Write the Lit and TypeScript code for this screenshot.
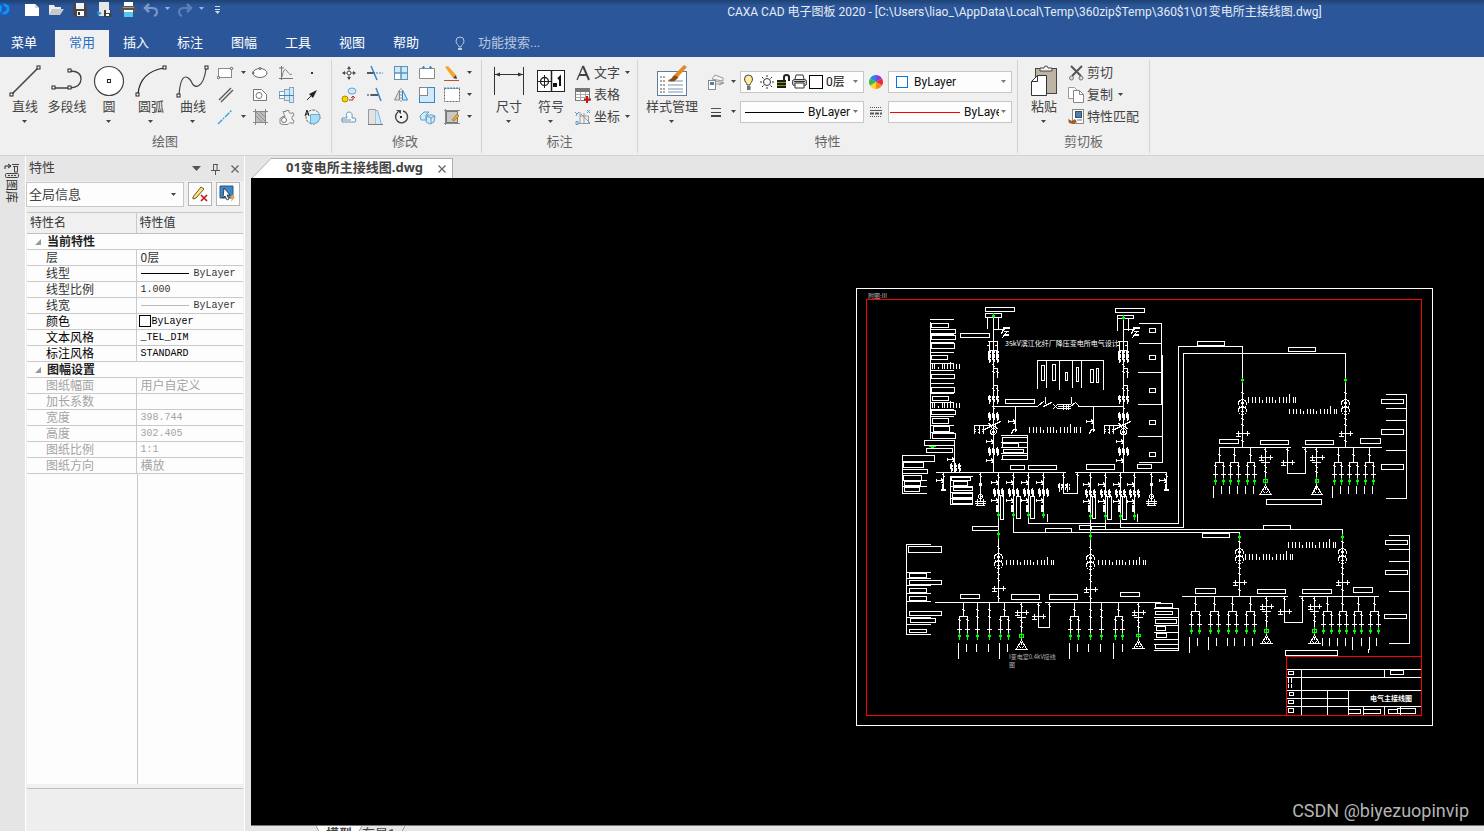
import { LitElement, html, svg, css } from "lit";
import { customElement, property } from "lit/decorators.js";

/* ---------- icons ---------- */
const B = "#3b86c6";
const F = "#cfeafb";
const box = (x: number, y: number) => svg`<rect x=${x} y=${y} width="3" height="3" fill="#fff" stroke="#222"/>`;

const icons: Record<string, any> = {
  logo: svg`<circle cx="4" cy="8" r="4" fill="none" stroke="#1593f5" stroke-width="3"/><path d="M0 2l4 4M8 12l3 3M0 14l3-4M8 3l3 2" stroke="#0a5fd0" stroke-width="2"/>`,
  newdoc: svg`<path d="M1 3h10l4 4v8H1z" fill="#fff"/><path d="M11 3v4h4" fill="#d6d6d6"/>`,
  open: svg`<path d="M1 14V4h5l1 2h6v2H5z" fill="#ececec"/><path d="M1 14l4-6h11l-4 6z" fill="#c9c9c9"/>`,
  save: svg`<path d="M1 2h14v14H3l-2-2z" fill="#474747"/><rect x="4" y="2" width="8" height="6" fill="#f3f3f3"/><rect x="5" y="10" width="7" height="5" fill="#fff"/><rect x="6" y="11" width="2" height="3" fill="#333"/>`,
  saveas: svg`<path d="M3 1h10v8H8v6H3z" fill="#e6e6e6"/><path d="M1 10l5 2-4 3z" fill="#2d9fd8"/><rect x="8" y="9" width="7" height="7" fill="#3d3d3d"/><rect x="10" y="9" width="4" height="3" fill="#eee"/><rect x="10" y="13" width="3" height="2" fill="#fff"/>`,
  print: svg`<rect x="4" y="1" width="9" height="5" fill="#fff"/><rect x="1" y="5" width="15" height="7" rx="1" fill="#555"/><rect x="3" y="6" width="11" height="1" fill="#999"/><rect x="4" y="9" width="9" height="5" fill="#fff"/><rect x="4" y="11" width="9" height="5" fill="#55c7ee"/>`,
  undo: svg`<path d="M6 3L2 7l4 4" fill="none" stroke="#7d99c9" stroke-width="2.500"/><path d="M2 7h7q5 0 5 4 0 3-3 4" fill="none" stroke="#7d99c9" stroke-width="2"/>`,
  redo: svg`<path d="M10 3l4 4-4 4" fill="none" stroke="#5d7fb8" stroke-width="2.500"/><path d="M14 7H7Q2 7 2 11q0 3 3 4" fill="none" stroke="#5d7fb8" stroke-width="2"/>`,
  more: svg`<path d="M2 5.500h5M2 8.500h5" stroke="#d5dceb"/><path d="M2 10h5l-2.500 3z" fill="#d5dceb"/>`,
  bulb: svg`<path d="M5 11c0-2-3-3-3-6a4 4 0 0 1 8 0c0 3-3 4-3 6z" fill="none" stroke="#b9c6df"/><path d="M4 13h4" stroke="#b9c6df" stroke-width="2"/>`,

  line: svg`<path d="M5 30L31 4" stroke="#444" stroke-width="1.600"/>${box(3, 29)}${box(30, 2)}`,
  pline: svg`<path d="M5 24h16q11-1 11-9T21 7" fill="none" stroke="#444" stroke-width="1.300"/>${box(3, 22)}${box(19, 22)}${box(19, 5)}`,
  circle: svg`<circle cx="18" cy="17" r="14.500" fill="#fff" stroke="#444" stroke-width="1.200"/><rect x="16.500" y="15.500" width="3" height="3" fill="#fff" stroke="#222"/>`,
  arc: svg`<path d="M5 30Q7 8 31 4" fill="none" stroke="#222" stroke-width="1.200"/>${box(3, 29)}${box(30, 2)}`,
  curve: svg`<path d="M4 31C6 4 15 14 17 19s11 7 14-14" fill="none" stroke="#444" stroke-width="1.200"/>${box(2, 30)}${box(30, 2)}`,
  rect: svg`<rect x="1.500" y="4.500" width="13" height="9" fill="#fff" stroke="#8a8a8a"/><circle cx="1.500" cy="13.500" r="1.200" fill="#fff" stroke="#555"/><circle cx="14.500" cy="4.500" r="1.200" fill="#fff" stroke="#555"/>`,
  dline: svg`<path d="M1 14L13 2M3 16L15 4" stroke="#555" stroke-width="1.300"/>`,
  cline: svg`<path d="M1 16L15 2" stroke="#2aa3e0" stroke-width="1.300" stroke-dasharray="6 1 2 1"/>`,
  ellipse: svg`<ellipse cx="8" cy="9" rx="7" ry="4.500" fill="#fff" stroke="#666"/><circle cx="8" cy="4.500" r="1" fill="#fff" stroke="#555"/><circle cx="1" cy="9" r="1" fill="#fff" stroke="#555"/>`,
  poly: svg`<path d="M1.500 3.500h8l5 5v6h-13z" fill="#fff" stroke="#777"/><circle cx="7" cy="9.500" r="3" fill="#fff" stroke="#777"/>`,
  hatch: svg`<rect x="3.500" y="3.500" width="10" height="11" fill="#bdbdbd" stroke="#777"/><path d="M1 3.500h15M1 14.500h15M3.500 1v16M13.500 1v16" stroke="#888"/><path d="M4 8l6 6M4 4l9 9M8 4l5 5" stroke="#8f8f8f"/>`,
  formula: svg`<path d="M3.500 2v14M1 14.500h14M1 4h5" fill="none" stroke="#777"/><path d="M4 13Q6 2 9 7t5 3" fill="none" stroke="#888"/>`,
  shaft: svg`<rect x="1.500" y="5.500" width="5" height="7" fill="#fff" stroke="#8ba3b6"/><rect x="6.500" y="3.500" width="5" height="11" fill="${F}" stroke="#8ba3b6"/><rect x="11.500" y="1.500" width="4" height="15" fill="${F}" stroke="#8ba3b6"/><path d="M1 9.500h15" stroke="${B}"/>`,
  gear: svg`<path d="M5 3.500h3v-1h3v2l2 1 2-1 1 3-2 1v3l2 1-1 3-3-1-2 2H5l-3-1v-5l3-2h2z" fill="#f4f4f4" stroke="#8a8a8a"/><circle cx="6" cy="12" r="2.500" fill="#fff" stroke="#777"/>`,
  point: svg`<rect x="7" y="8" width="2" height="2" fill="#333"/>`,
  arrow: svg`<path d="M3 14l5-5" stroke="#222"/><path d="M13 4L5 8l4 4z" fill="#222"/>`,
  detail: svg`<circle cx="9" cy="9" r="7" fill="none" stroke="#666" stroke-dasharray="3 1"/><path d="M6.500 6.500h9a7 7 0 0 1-9 9z" fill="#a9dcf7" stroke="#69aeda"/><path d="M1 8l2-6 2 6M2 6h3" fill="none" stroke="#222"/>`,

  move: svg`<path d="M9 2l2 3H7zM9 16l2-3H7zM2 9l3-2v4zM16 9l-3-2v4z" fill="#444"/><rect x="7.500" y="7.500" width="3" height="3" fill="#fff" stroke="#777"/><path d="M9 4v3M9 11v3M4 9h3M11 9h3" stroke="#555"/>`,
  copyobj: svg`<circle cx="5" cy="13" r="3" fill="#f7d500" stroke="#a58a00"/><ellipse cx="12" cy="5" rx="4" ry="3" fill="${F}" stroke="#62a7d8"/><path d="M9 14h4v-4M11 12l2-2 2 2" fill="none" stroke="#a33"/>`,
  offset: svg`<path d="M2 10h5q-2-6 2-6t3 6h3q2 2 0 4H2zM2 12h9" fill="#f6fbff" stroke="#6c94b3"/>`,
  trim: svg`<path d="M1 9h8" stroke="#333" stroke-width="1.600"/><path d="M10 9h7" stroke="${B}" stroke-dasharray="2 1"/><path d="M5 2l6 14" stroke="${B}" stroke-width="1.500"/>`,
  extend: svg`<path d="M1 9h4" stroke="#333" stroke-dasharray="2 1"/><path d="M5 9h7" stroke="#333" stroke-width="1.600"/><path d="M10 2l5 13" stroke="${B}" stroke-width="1.500"/>`,
  taper: svg`<path d="M2.500 1.500h7v15h-7z" fill="#e2e2e2" stroke="#999"/><path d="M9.500 2.500h2l4 14h-6" fill="${F}" stroke="#7db5dc"/><path d="M2 16.500h15" stroke="#777"/>`,
  array: svg`<rect x="2.500" y="2.500" width="13" height="13" fill="${F}" stroke="#5e92b8"/><rect x="3" y="9" width="6" height="6" fill="#fff"/><path d="M9 2v14M2 9h14" stroke="#5e92b8" stroke-width="1.500"/>`,
  mirror: svg`<path d="M7.500 4v10h-5z" fill="#ddd" stroke="#888"/><path d="M10.500 4v10h5z" fill="${F}" stroke="${B}"/><path d="M9 2v14" stroke="#999" stroke-dasharray="2 1"/>`,
  rotate: svg`<path d="M6 4a6 6 0 1 0 5-1" fill="none" stroke="#444" stroke-width="1.400"/><path d="M4 2h5v4z" fill="#444"/><rect x="8" y="8" width="2" height="2" fill="#222"/>`,
  brk: svg`<path d="M4 4.500H1.500v10h15v-10H14M7 4.500h4" fill="#fff" stroke="#888"/><path d="M4 4h3M11 4h3M5.500 2v3M12.500 2v3" stroke="${B}" stroke-width="1.400"/>`,
  scale: svg`<rect x="1.500" y="1.500" width="15" height="15" fill="${F}" stroke="${B}"/><rect x="1.500" y="1.500" width="8" height="8" fill="#fff" stroke="#888"/>`,
  explode: svg`<path d="M2 8l4-4h5l-3 3v5H3zM9 7h5l3 1-1 6-4 2-4-2z" fill="${F}" stroke="#62a0cc"/><path d="M9 8l4 2 4-2M13 10v6" fill="none" stroke="#62a0cc"/>`,
  pencil: svg`<path d="M2 3l3-1 8 9-3 3z" fill="#f2a72c"/><path d="M10 14l3-3 1 4z" fill="#4a3a2a"/><path d="M1 16.500h15" stroke="#b9532a"/>`,
  stretch: svg`<rect x="1.500" y="2.500" width="15" height="13" fill="#fff" stroke="#666" stroke-dasharray="2 1"/><path d="M1 2h16" stroke="${B}" stroke-dasharray="2 1"/>`,
  edithatch: svg`<rect x="3.500" y="3.500" width="11" height="11" fill="#c8c8c8" stroke="#777"/><path d="M1 2.500h16M1 15.500h16M2.500 1v16" stroke="#888"/><path d="M9 12l5-6 2 2-5 5z" fill="#f2a72c" stroke="#9a6210" stroke-width=".6"/>`,

  dim: svg`<path d="M3.500 3v28M32.500 3v28M4 10.500h28" stroke="#333"/><path d="M4 10.500l5-2v4zM32 10.500l-5-2v4z" fill="#333"/>`,
  symbol: svg`<rect x="4.500" y="6.500" width="27" height="21" fill="#fff" stroke="#222"/><path d="M18.500 7v21" stroke="#222" stroke-width="1.500"/><circle cx="11.500" cy="17.500" r="4" fill="none" stroke="#222" stroke-width="1.300"/><path d="M5 17.500h13M11.500 11v13" stroke="#222"/><path d="M21 20h2v2h-2zM27 22v-9l-2 2" fill="none" stroke="#111" stroke-width="2"/>`,
  textA: svg`<path d="M3 16L9 2" stroke="#444" stroke-width="1.300"/><path d="M9 2l6 14M5 11h8" fill="none" stroke="#444" stroke-width="2"/>`,
  table: svg`<rect x="1.500" y="3.500" width="14" height="11" fill="#fff" stroke="#777"/><rect x="1" y="2" width="15" height="4" fill="#777"/><path d="M2 8.500h13M2 11.500h13M6.500 6v9M11.500 6v9" stroke="#aaa"/><path d="M13 10v7M10 13.500h7" stroke="#c4161c" stroke-width="2"/>`,
  coord: svg`<path d="M6 4v12M6 8h8M10 5v11M7 6l9 9M4 15.500h12M14.500 8v8" fill="none" stroke="#999"/><path d="M1 4l2 2 2-2M3 6l-1 2M13 2l3 3M16 2l-3 3M2 13.500h2v3H2z" stroke="#5b9bd0" fill="none"/>`,

  style: svg`<rect x="3.500" y="7.500" width="29" height="24" fill="#fff" stroke="#5d7f9d"/><path d="M6 13h5M6 17h5M6 21h5M6 25h5M6 28h5" stroke="#555" stroke-dasharray="2 1"/><path d="M14 17h15M14 21h15M14 25h15M14 28h15" stroke="#7b95ab"/><path d="M14 16q4-1 5-4l6-3-1 5q-5 6-10 2z" fill="#8a4b14"/><path d="M20 11L30 1l3 2-9 10z" fill="#e08a28"/>`,
  layers: svg`<path d="M5 6l3-4 8 3v3l-6-1zM5 8l8 1 4 1-5 2M7 11h6l3-2" fill="#f5f5f5" stroke="#999"/><rect x="1.500" y="7.500" width="7" height="9" fill="#fff" stroke="#888"/><rect x="3" y="9" width="4" height="3" fill="#4d7fb5"/>`,
  lines: svg`<path d="M4 5.500h10" stroke="#555"/><path d="M4 9.500h10" stroke="#444"/><path d="M4 13h10" stroke="#444" stroke-width="2"/>`,
  wheel: svg`<path d="M9 9V2a7 7 0 0 1 6 3.500z" fill="#8b3be0"/><path d="M9 9l6-3.500a7 7 0 0 1 0 7z" fill="#e8283c"/><path d="M9 9l6 3.500A7 7 0 0 1 9 16z" fill="#f58a1f"/><path d="M9 9v7a7 7 0 0 1-6-3.500z" fill="#ffd51f"/><path d="M9 9l-6 3.500a7 7 0 0 1 0-7z" fill="#33b94c"/><path d="M9 9L3 5.500A7 7 0 0 1 9 2z" fill="#2886ea"/>`,
  ltype: svg`<path d="M3 4.500h12M3 13.500h12" stroke="#555" stroke-dasharray="1 1"/><path d="M3 7.500h12" stroke="#555"/><path d="M3 10.500h12" stroke="#555" stroke-width="2" stroke-dasharray="4 1"/>`,
  lamp: svg`<path d="M6 12c0-2-2.500-3-2.500-6a4 4 0 0 1 8 0c0 3-2.500 4-2.500 6z" fill="#ffeb9c" stroke="#444"/><path d="M6 14h3.500M6 16h3.500" stroke="#444" stroke-width="1.500"/>`,
  sun: svg`<circle cx="8" cy="9" r="3.500" fill="#fff" stroke="#333"/><path d="M8 2v2M8 14v2M1 9h2M13 9h2M3 4l1.500 1.500M11.500 12.500L13 14M13 4l-1.500 1.500M4.500 12.500L3 14" stroke="#333"/>`,
  lock: svg`<rect x="1" y="7" width="9" height="8" fill="#1e1e0c"/><path d="M1 9.500h9M1 12.500h9" stroke="#8a8f2b"/><path d="M8 7V4q0-2 2.500-2T13 4v4" fill="none" stroke="#222" stroke-width="2"/>`,
  printer: svg`<path d="M4 6l1-4h7l1 4" fill="#fff" stroke="#333"/><rect x="1.500" y="6.500" width="14" height="6" rx="2" fill="#ccc" stroke="#333"/><path d="M4 10h9v5H4z" fill="#fff" stroke="#333"/><path d="M3 8.500h11" stroke="#333"/>`,
  paste: svg`<rect x="9.500" y="4.500" width="21" height="25" fill="#bdb4a5" stroke="#444"/><path d="M14 7V4h4q0-2 2-2t2 2h4v3z" fill="#f7f7f7" stroke="#444"/><path d="M5.500 17.500l6-6h9v20h-15z" fill="#fff" stroke="#333"/><path d="M5.500 17.500h6v-6" fill="none" stroke="#333"/>`,
  cut: svg`<path d="M4 2l10 10M15 2L5 12" stroke="#555" stroke-width="2"/><circle cx="4.500" cy="14" r="2" fill="#ddd" stroke="#777"/><circle cx="14" cy="14" r="2" fill="#ddd" stroke="#777"/>`,
  copy: svg`<path d="M1.500 1.500h6l3 3v8h-9z" fill="#fff" stroke="#999"/><path d="M6.500 4.500h6l4 4v8h-10z" fill="#fff" stroke="#888"/><path d="M12.500 4.500v4h4" fill="none" stroke="#888"/>`,
  match: svg`<rect x="5.500" y="1.500" width="11" height="14" fill="#fff" stroke="#888"/><rect x="8.500" y="3.500" width="6" height="6" fill="#4d7fb5" stroke="#356"/><path d="M10 12h5" stroke="#777"/><path d="M1 11l4 2 3-2 2 3-4 2-4-1z" fill="#a45a2a"/>`,
  rail: svg`<path d="M1 7V4h5M4 2l3 2-3 2" fill="none" stroke="#222"/><path d="M8 2.500h7M9 4.500h5M10.500 5v5h3V5" fill="none" stroke="#444"/><rect x="1.500" y="11.500" width="13" height="4" rx="1" fill="#ddd" stroke="#444"/><path d="M4 13.500h8" stroke="#444" stroke-dasharray="2 1"/>`,
  pin: svg`<path d="M4 2.500h5M4.500 2v6M8 2v6M2 8.500h9M6.500 9v4" stroke="#555" fill="none"/>`,
  close: svg`<path d="M2.500 3.500l7 7M9.500 3.500l-7 7" stroke="#666" stroke-width="1.300"/>`,
  clearsel: svg`<path d="M2 12L10 2l3 2-8 9-3 1z" fill="#ffe27a" stroke="#6b5a1e"/><path d="M10 10l6 6M16 10l-6 6" stroke="#c61a1a" stroke-width="1.700"/>`,
  quicksel: svg`<path d="M1 1h13v12H1z" fill="#3f87c9" stroke="#27598b"/><path d="M5 3l6 7H8l2 4-2 1-2-4-2 2z" fill="#fff" stroke="#222" stroke-width=".8"/><path d="M14 9l-3 4h2l-1 4 4-5h-2z" fill="#f5a623"/>`,
};

const icon = (name: string, w = 18, h = 18) =>
  html`<svg width=${w} height=${h} viewBox="0 0 ${w} ${h}" aria-hidden="true">${icons[name]}</svg>`;
const caret = html`<svg class="caret" width="6" height="4" viewBox="0 0 6 4" aria-hidden="true"><path d="M0 0h5L2.500 3z" fill="currentColor"/></svg>`;

const base = css`
  * { box-sizing: border-box; }
  button, select, input {
    font: inherit; color: inherit; border: 0; padding: 0; margin: 0;
    background: none; border-radius: 0; outline: 0;
  }
  svg { display: block; flex: none; }
`;

/* ---------- schematic sheet ---------- */
/* Coordinates inside a zone are given in thirds of a pixel from the zone origin. */
class Zone {
  w = ""; g = ""; r = "";
  constructor(private ox: number, private oy: number) {}
  px(v: number) { return this.ox + Math.floor(v / 3) + 0.5; }
  py(v: number) { return this.oy + Math.floor(v / 3) + 0.5; }
  seg(x1: number, y1: number, x2: number, y2: number) {
    return `M${this.px(x1)} ${this.py(y1)}L${this.px(x2)} ${this.py(y2)}`;
  }
  l(x1: number, y1: number, x2: number, y2: number) { this.w += this.seg(x1, y1, x2, y2); return this; }
  h(y: number, ...xs: number[]) { for (let i = 0; i < xs.length; i += 2) this.l(xs[i], y, xs[i + 1], y); return this; }
  hs(x1: number, x2: number, ...ys: number[]) { ys.forEach((y) => this.l(x1, y, x2, y)); return this; }
  vs(y1: number, y2: number, ...xs: number[]) { xs.forEach((x) => this.l(x, y1, x, y2)); return this; }
  boxes(...list: number[][]) {
    list.forEach(([a, b, c, d]) => {
      this.w += `M${this.px(a)} ${this.py(b)}H${this.px(c)}V${this.py(d)}H${this.px(a)}Z`;
    });
    return this;
  }
  green(x: number, y: number, s = 12) {
    this.g += this.seg(x, y - s, x, y + s) + this.seg(x - 3, y - 2, x + 3, y - 2) + this.seg(x - 3, y + 1, x + 3, y + 1);
    return this;
  }
  knot(x: number, y: number) {
    return this.l(x - 3, y - 3, x, y - 3).l(x, y + 3, x + 3, y + 1);
  }
  cross(x: number, y: number) {
    return this.l(x - 18, y, x + 22, y).l(x - 12, y - 7, x - 12, y + 7).l(x + 16, y - 7, x + 16, y + 6).l(x - 18, y + 8, x - 6, y + 8);
  }
  sw(x: number, y: number) {
    return this.l(x - 22, y, x - 7, y).l(x - 21, y - 3, x - 21, y + 3).l(x - 7, y - 6, x - 3, y).l(x - 7, y + 6, x, y + 3);
  }
  triple(x: number, y: number) {
    [-12, 0, 12].forEach((d) => {
      const c = x + d;
      this.l(c, y - 12, c, y + 12).l(c - 3, y - 9, c - 3, y + 2).l(c + 4, y - 7, c + 4, y - 4).l(c + 4, y + 1, c + 4, y + 8);
    });
    return this;
  }
  ticks(x: number, y: number) {
    [[0, 0], [12, 0], [21, 0], [33, 0], [42, 8], [54, 0], [63, 0], [72, 0], [81, 8], [93, 0], [105, 0], [114, 0], [123, -9], [135, 0], [141, 0]]
      .forEach(([d, t]) => this.l(x + d, y + t, x + d, y + 14));
    return this;
  }
  ring(x: number, y: number, r: number) {
    const X = this.px(x), Y = this.py(y), q = Math.round(r / 3);
    this.w += `M${X - q} ${Y}a${q} ${q} 0 1 0 ${2 * q} 0a${q} ${q} 0 1 0 ${-2 * q} 0Z`;
    return this;
  }
  transformer(x: number, y: number) {
    return this.ring(x, y, 12).ring(x, y + 21, 12).l(x - 4, y - 3, x, y + 2).l(x + 4, y - 3, x, y + 2)
      .l(x, y + 20, x - 4, y + 24).l(x, y + 20, x + 4, y + 24).knot(x, y - 30).knot(x, y + 48).knot(x, y + 66);
  }
  fork(x: number, a: number, b: number, bus: number, dy: number, end: number) {
    this.l(x, bus, x, dy).knot(x, bus + 24).l(a, dy, b, dy);
    [a, b].forEach((c) => {
      this.l(c, dy, c, end).knot(c, dy + 12).l(c - 5, end - 29, c + 5, end - 29).green(c, end - 9, 9);
    });
    return this;
  }
  single(x: number, bus: number, end: number) {
    return this.l(x, bus, x, end).knot(x, bus + 24).knot(x, bus + 44).l(x - 5, end - 29, x + 5, end - 29).green(x, end - 9, 9);
  }
  pt(x: number, bus: number, gy: number) {
    this.l(x, bus, x, gy + 12).knot(x, bus + 10).cross(x, bus + 30).l(x - 12, bus + 45, x + 12, bus + 45).knot(x, bus + 58).knot(x, bus + 74);
    this.g += this.seg(x - 5, gy - 4, x + 5, gy - 4) + this.seg(x - 5, gy + 4, x + 5, gy + 4) + this.seg(x - 5, gy - 4, x - 5, gy + 4) + this.seg(x + 5, gy - 4, x + 5, gy + 4) + this.seg(x, gy - 10, x, gy + 8);
    return this.l(x, gy + 14, x - 14, gy + 38).l(x, gy + 14, x + 14, gy + 38).l(x - 17, gy + 39, x + 17, gy + 39)
      .l(x, gy + 20, x, gy + 26).l(x - 7, gy + 32, x - 4, gy + 34).l(x + 7, gy + 32, x + 4, gy + 34);
  }
  tie(a: number, b: number, top: number, bottom: number) {
    return this.l(a, top, a, bottom).l(a, bottom, b, bottom).l(b, bottom, b, top).knot(a, top + 8).knot(b, top + 10).cross(a, bottom - 32);
  }
}

function incoming(z: Zone, x: number, dy: number) {
  z.vs(97 + dy, 562, x).vs(97 + dy, 131 + dy, x - 17, x + 16);
  z.hs(x, x + 34, 133).hs(x + 30, x + 47, 127, 130).hs(x + 34, x + 45, 139, 148, 151).l(x + 25, 145, x + 30, 133).l(x + 26, 158, x + 40, 142);
  z.h(170, x - 15, x + 12).vs(170, 196, x - 12, x + 12).hs(x - 18, x - 12, 182).hs(x + 6, x + 12, 182).h(196, x - 12, x + 12);
  z.triple(x, 207).triple(x, 221).knot(x, 242).h(250, x, x + 12).vs(250, 276, x + 12).knot(x, 262).knot(x + 12, 262);
  z.h(301, x, x + 12).vs(301, 330, x + 12).knot(x, 314).knot(x + 12, 314).triple(x, 342).knot(x, 368).triple(x, 394);
  z.h(421, x - 56, x).vs(421, 445, x - 56, x - 43, x - 30).hs(x - 58, x - 54, 432, 440).hs(x - 46, x - 42, 434, 442).hs(x - 34, x - 30, 434, 440);
  z.l(x - 28, 433, x + 20, 409).l(x - 14, 415, x + 12, 430).ring(x, 425, 6).ring(x, 440, 9).l(x - 4, 443, x, 437).l(x, 437, x + 4, 443);
  z.sw(x, 469).triple(x, 499).sw(x, 525);
}

function buildSheet() {
  const a = new Zone(890, 285);
  a.vs(112, 460, 121).hs(121, 191, 103, 148, 172, 202, 235, 256, 295, 325, 352, 372, 394, 421, 442);
  a.boxes([124, 115, 176, 127], [121, 133, 197, 145], [123, 151, 197, 163], [124, 175, 194, 190], [124, 211, 173, 223],
    [124, 268, 194, 280], [124, 307, 194, 322], [127, 334, 176, 346], [124, 376, 197, 388], [127, 400, 176, 415],
    [130, 424, 179, 439], [127, 445, 197, 460], [103, 466, 194, 481], [109, 490, 188, 502]);
  [237, 354].forEach((y) => a.vs(y, y + 12, 126, 134, 158, 164, 172, 190, 199, 208).vs(y + 9, y + 12, 146).vs(y - 6, y + 12, 180));
  a.vs(466, 562, 193).sw(193, 523).triple(196, 548);
  a.g += a.seg(118, 485, 136, 485) + a.seg(124, 488, 130, 488);
  a.vs(512, 625, 37).hs(37, 110, 586, 604, 625)
    .boxes([37, 512, 134, 529], [40, 532, 101, 547], [37, 553, 113, 565], [40, 571, 95, 585], [43, 589, 92, 601], [43, 607, 89, 619]);
  a.h(562, 138, 527, 556, 829);
  a.vs(574, 658, 181).hs(181, 247, 574, 604, 622, 640, 658)
    .boxes([184, 576, 242, 587], [190, 589, 233, 601], [190, 607, 248, 616], [187, 625, 248, 637], [187, 643, 248, 655]);
  a.boxes([211, 145, 299, 157], [286, 67, 374, 79], [286, 85, 335, 97], [676, 70, 764, 82], [682, 91, 731, 101],
    [346, 343, 434, 355], [361, 541, 404, 553], [415, 541, 500, 553], [589, 538, 674, 553], [742, 538, 785, 550]);
  incoming(a, 310, 0);
  incoming(a, 700, 4);
  a.green(310, 92, 6).green(700, 98, 6);
  a.h(227, 443, 640).vs(227, 310, 443).vs(227, 307, 469, 547, 574).vs(227, 314, 508, 640)
    .boxes([454, 241, 464, 286], [487, 238, 497, 286], [526, 262, 533, 286], [559, 247, 566, 290], [601, 253, 611, 292], [619, 250, 626, 292]);
  a.h(364, 310, 443, 566, 700).l(445, 362, 460, 350).vs(337, 354, 466, 544).l(460, 364, 484, 352).l(490, 358, 502, 370).l(490, 370, 502, 358)
    .hs(505, 540, 358, 364, 370).vs(358, 372, 520, 529, 535).l(540, 364, 556, 352).l(556, 352, 566, 362);
  [376, 610].forEach((x) => a.vs(364, 436, x).sw(x, 409).knot(x, 436).h(433, x - 6, x + 4).l(x - 12, 445, x - 5, 434));
  a.ticks(418, 427).vs(427, 441, 571);
  a.vs(451, 523, 412).hs(333, 412, 451, 472, 487, 505, 523)
    .boxes([337, 457, 412, 472], [337, 475, 386, 486], [340, 493, 401, 502], [337, 511, 412, 523]);
  a.vs(115, 358, 814).vs(211, 532, 817).hs(748, 814, 115, 175).hs(745, 815, 262, 358, 454).h(532, 748, 817)
    .boxes([778, 130, 797, 142], [778, 211, 797, 223], [778, 310, 797, 322], [778, 406, 797, 418], [778, 502, 797, 514]);
  [160, 829].forEach((x) => a.vs(562, 615, x).sw(x, 586).knot(x, 572).vs(598, 613, x - 3).hs(x - 5, x + 5, 612, 615));
  [271, 784].forEach((x) => a.vs(562, 645, x).knot(x, 572).ring(x, 597, 4).knot(x, 632).ring(x, 634, 6)
    .hs(x - 15, x + 15, 649, 655).vs(643, 657, x - 9, x + 9).h(660, x - 11, x + 11));
  [[325, 592, 0], [370, 592, 0], [415, 592, 0], [460, 592, 0], [601, 597, 4], [646, 597, 4], [691, 597, 4], [733, 597, 4]].forEach(([x, y, d]) =>
    a.vs(562, 692 + d, x).knot(x, 575).sw(x, y).triple(x, 622 + d).sw(x, 646 + d).vs(662, 680, x - 5, x - 2).green(x, 690 + d, 8));
  a.boxes([331, 631, 341, 703], [379, 634, 392, 700], [421, 634, 434, 700], [607, 634, 617, 700], [652, 634, 665, 703], [697, 634, 710, 703])
    .vs(688, 710, 472, 742).vs(562, 625, 520, 562).h(625, 520, 562).triple(521, 606).knot(520, 575).knot(562, 570);

  const b = new Zone(890, 500);
  b.vs(45, 307, 325, 601).vs(50, 97, 370).h(97, 370, 1048).vs(50, 70, 415).h(70, 415, 866).vs(50, 88, 646).h(88, 646, 1357)
    .vs(50, 82, 691).h(82, 691, 880);
  b.boxes([247, 79, 325, 91], [466, 85, 545, 97], [568, 76, 601, 88], [604, 79, 646, 88], [55, 139, 155, 157], [58, 220, 110, 233],
    [58, 241, 155, 253], [58, 265, 110, 277], [58, 289, 110, 301], [58, 334, 155, 346], [61, 355, 137, 367], [58, 388, 110, 398],
    [211, 283, 269, 295], [364, 283, 449, 298], [478, 283, 563, 298], [691, 277, 749, 289]);
  b.vs(133, 403, 49).hs(49, 122, 133, 217, 235, 256, 280, 304, 352, 373, 403).h(307, 135, 453, 466, 811);
  b.green(325, 103).green(601, 107).transformer(325, 173).transformer(601, 176).ticks(349, 180).ticks(625, 180)
    .cross(325, 265).cross(601, 268).knot(325, 293).knot(601, 293);
  [220, 343, 553].forEach((x) => b.fork(x, x - 12, x + 12, 307, 349, 418));
  b.fork(685, 676, 697, 307, 349, 418);
  [262, 298, 601, 634].forEach((x) => b.single(x, 307, 418));
  b.pt(394, 307, 408).pt(745, 307, 406).tie(445, 478, 307, 382);
  b.vs(430, 475, 205, 328, 538, 670).vs(432, 454, 229, 259, 295, 352, 562, 595, 631, 697);
  b.vs(325, 451, 866).hs(793, 866, 325, 352, 376, 397, 418, 433, 451)
    .boxes([796, 310, 848, 322], [796, 334, 848, 343], [796, 358, 860, 370], [799, 379, 827, 391], [799, 400, 830, 412], [796, 433, 866, 445]);

  const c = new Zone(1160, 330);
  c.h(49, 55, 247).vs(49, 580, 55).vs(49, 352, 247).h(70, 70, 556).vs(70, 592, 70).vs(70, 352, 556).h(352, 178, 391, 427, 664);
  c.boxes([112, 34, 194, 46], [385, 52, 467, 64], [178, 328, 236, 340], [301, 331, 386, 343], [436, 331, 521, 343], [601, 325, 662, 340],
    [319, 508, 485, 523], [664, 208, 731, 220], [664, 298, 731, 313], [664, 403, 731, 418]);
  c.vs(193, 505, 739).hs(678, 739, 193, 235, 271, 361, 505);
  [247, 556].forEach((x) => c.green(x, 150, 6).transformer(x, 220).cross(x, 310).knot(x, 333));
  c.ticks(265, 202).ticks(388, 237);
  [[178, 166, 190], [223, 211, 235], [271, 262, 283], [535, 523, 544], [580, 568, 592], [628, 616, 640]].forEach(([x, l, r]) => c.fork(x, l, r, 352, 397, 462));
  c.pt(316, 352, 453).pt(470, 352, 453).tie(382, 436, 352, 430).vs(468, 502, 160, 517).vs(468, 490, 184, 208, 232, 256, 280, 541, 565, 589, 613, 637);

  const d = new Zone(1160, 500);
  d.vs(97, 289, 238).vs(88, 289, 547).h(289, 66, 382, 418, 656);
  d.boxes([310, 76, 392, 88], [127, 100, 209, 112], [106, 265, 167, 280], [292, 268, 377, 280], [427, 268, 515, 280], [580, 262, 638, 277],
    [676, 121, 743, 133], [676, 211, 743, 223], [673, 343, 740, 355], [376, 451, 533, 466]);
  d.vs(106, 430, 748).hs(688, 748, 106, 148, 184, 274, 430);
  [238, 547].forEach((x) => d.green(x, 112, 9).transformer(x, 157).cross(x, 247).knot(x, 270));
  d.ticks(256, 163).ticks(385, 127);
  [[106, 94, 118], [163, 151, 175], [217, 205, 229], [271, 259, 283], [502, 490, 514], [547, 538, 559], [595, 583, 604], [643, 631, 655]]
    .forEach(([x, l, r]) => d.fork(x, l, r, 289, 334, 401));
  d.pt(319, 289, 392).pt(463, 289, 392).tie(373, 427, 289, 367);
  d.vs(412, 457, 88).vs(412, 448, 145, 577, 628).vs(415, 436, 112, 169, 202, 223, 253, 277, 487, 508, 532, 556, 604, 649).vs(447, 457, 625);
  d.hs(380, 784, 508, 532, 571, 619).h(595, 380, 565).vs(508, 646, 424).vs(571, 646, 502, 565).vs(508, 532, 673).vs(619, 646, 673, 610, 721)
    .vs(534, 546, 385, 394).vs(552, 562, 385, 394)
    .boxes([385, 514, 401, 524], [691, 511, 731, 523], [388, 577, 401, 587], [385, 601, 401, 611], [385, 626, 401, 638],
      [565, 628, 602, 640], [611, 628, 662, 640], [685, 628, 712, 640], [712, 625, 767, 640]);
  d.r += d.seg(379, 469, 784, 469) + d.seg(379, 469, 379, 646);

  const all = [a, b, c, d];
  return { w: all.map((z) => z.w).join(""), g: all.map((z) => z.g).join(""), r: d.r };
}

@customElement("cad-sheet")
class CadSheet extends LitElement {
  static styles = css`
    :host { display: block; }
    svg { display: block; }
    .ink { fill: none; stroke-width: 1px; stroke-linecap: square; shape-rendering: crispEdges; }
    .white { stroke: #fff; }
    .green { stroke: #0f0; }
    .red { stroke: #f00; }
    text { font-family: "Noto Sans CJK SC", sans-serif; font-size: 7px; fill: #fff; }
    .note { font-size: 6px; fill: #b4b4b4; }
    .strong { font-weight: 700; }
  `;
  render() {
    const s = buildSheet();
    return html`<svg width="577" height="438" viewBox="856 288 577 438" role="img" aria-label="电气主接线图">
      <path class="ink white" d="M856.500 288.500H1432.500V725.500H856.500Z"/>
      <path class="ink white" d=${s.w}/>
      <path class="ink red" d="M866.500 299.500H1421.500V715.500H866.500Z"/>
      <path class="ink red" d=${s.r}/>
      <path class="ink green" d=${s.g}/>
      <text class="note" x="868" y="298">附图:III</text>
      <text x="1005" y="346">35kV滨江化纤厂降压变电所电气设计</text>
      <text class="note" x="1009" y="659">I变电室0.4kV接线</text>
      <text class="note" x="1009" y="667">图</text>
      <text class="strong" x="1370" y="701">电气主接线图</text>
    </svg>`;
  }
}

/* ---------- ribbon ---------- */
@customElement("cad-ribbon")
class CadRibbon extends LitElement {
  static styles = [base, css`
    :host { display: flex; background: #f0f0f0; padding: 3px 0 2px; color: #444; }
    .group { display: flex; flex-direction: column; border-right: 1px solid #d4d4d4; padding: 0 5px; }
    .group.draw { padding: 0 5px 0 4px; }
    .group.modify { padding: 0 7px 0 4px; }
    .group.notes { padding: 0 6px; }
    .body { display: flex; height: 72px; }
    .title { margin: 0 -5px; height: 21px; font-size: 13px; line-height: 20px; text-align: center; color: #666; font-weight: 400; }
    .big { display: flex; flex-direction: column; align-items: center; width: 42px; padding-top: 4px; white-space: nowrap; }
    .big.wide { width: 58px; }
    .big span { line-height: 18px; height: 18px; }
    .big .caret { margin-top: 4px; }
    .small { display: grid; grid-auto-flow: column; grid-template-rows: repeat(3, 22px); padding-top: 2px; }
    .tool { display: flex; align-items: center; justify-content: center; width: 26px; }
    .tool.drop { width: 34px; padding-left: 3px; justify-content: flex-start; }
    .tool.drop .caret { margin-left: 6px; }
    .item { display: flex; align-items: center; padding-left: 2px; white-space: nowrap; }
    .item span { margin-left: 2px; margin-right: 5px; line-height: 18px; }
    .fields { display: grid; grid-template-columns: 24px 12px 124px 24px 124px; gap: 8px 0; padding: 11px 0 0 3px; grid-auto-rows: 22px; align-content: start; }
    .fields > button { display: flex; align-items: center; justify-content: center; }
    .combo { display: flex; align-items: center; background: #fdfdfd; border: 1px solid #c6c6c6; overflow: hidden; padding-right: 4px; color: #111; font-size: 12px; }
    .combo select { flex: 1; min-width: 0; appearance: none; height: 20px; overflow: hidden; text-overflow: clip; }
    .combo .caret { color: #777; margin-left: 2px; }
    .swatch { width: 12px; height: 12px; border: 1px solid #0b76d8; margin: 0 6px 0 7px; background: #fff; flex: none; }
    .swatch.black { width: 14px; height: 14px; border-color: #000; margin: 0 3px 0 0; }
    .stroke { width: 59px; height: 1px; background: #000; margin: 0 4px; flex: none; }
    .stroke.red { width: 70px; background: #f00; margin: 0 4px 0 1px; }
  `];

  big(name: string, label: string, drop = true, wide = false) {
    return html`<button class="big ${wide ? "wide" : ""}">${icon(name, 36, 34)}<span>${label}</span>${drop ? caret : ""}</button>`;
  }
  tool(name: string, label: string, drop = false) {
    return html`<button class="tool ${drop ? "drop" : ""}" aria-label=${label}>${icon(name)}${drop ? caret : ""}</button>`;
  }
  item(name: string, label: string, drop = false) {
    return html`<button class="item">${icon(name)}<span>${label}</span>${drop ? caret : ""}</button>`;
  }

  render() {
    return html`
      <section class="group draw">
        <div class="body">
          ${this.big("line", "直线")}${this.big("pline", "多段线", false)}${this.big("circle", "圆")}${this.big("arc", "圆弧")}${this.big("curve", "曲线")}
          <div class="small">
            ${this.tool("rect", "矩形", true)}${this.tool("dline", "平行线")}${this.tool("cline", "中心线", true)}
            ${this.tool("ellipse", "椭圆")}${this.tool("poly", "孔轴")}${this.tool("hatch", "剖面线")}
            ${this.tool("formula", "公式曲线")}${this.tool("shaft", "轴")}${this.tool("gear", "齿轮")}
            ${this.tool("point", "点")}${this.tool("arrow", "箭头")}${this.tool("detail", "局部放大")}
          </div>
        </div>
        <h2 class="title">绘图</h2>
      </section>
      <section class="group modify">
        <div class="body">
          <div class="small">
            ${this.tool("move", "平移")}${this.tool("copyobj", "平移复制")}${this.tool("offset", "等距线")}
            ${this.tool("trim", "裁剪")}${this.tool("extend", "延伸")}${this.tool("taper", "拉伸")}
            ${this.tool("array", "阵列")}${this.tool("mirror", "镜像")}${this.tool("rotate", "旋转")}
            ${this.tool("brk", "打断")}${this.tool("scale", "缩放")}${this.tool("explode", "分解")}
            ${this.tool("pencil", "删除", true)}${this.tool("stretch", "过渡", true)}${this.tool("edithatch", "编辑剖面线", true)}
          </div>
        </div>
        <h2 class="title">修改</h2>
      </section>
      <section class="group notes">
        <div class="body">
          ${this.big("dim", "尺寸")}${this.big("symbol", "符号")}
          <div class="small">${this.item("textA", "文字", true)}${this.item("table", "表格")}${this.item("coord", "坐标", true)}</div>
        </div>
        <h2 class="title">标注</h2>
      </section>
      <section class="group">
        <div class="body">
          ${this.big("style", "样式管理", true, true)}
          <div class="fields">
            <button aria-label="图层">${icon("layers")}</button><button aria-label="图层菜单">${caret}</button>
            <div class="combo">${icon("lamp", 18)}${icon("sun", 17)}${icon("lock", 15)}${icon("printer", 18)}<span class="swatch black"></span>
              <select aria-label="当前层"><option>0层</option></select>${caret}</div>
            <button aria-label="颜色">${icon("wheel")}</button>
            <div class="combo"><span class="swatch"></span><select aria-label="颜色选择"><option>ByLayer</option></select>${caret}</div>
            <button aria-label="线宽">${icon("lines")}</button><button aria-label="线宽菜单">${caret}</button>
            <div class="combo"><span class="stroke"></span><select aria-label="线宽选择"><option>ByLayer</option></select>${caret}</div>
            <button aria-label="线型">${icon("ltype")}</button>
            <div class="combo"><span class="stroke red"></span><select aria-label="线型选择"><option>ByLayer</option></select>${caret}</div>
          </div>
        </div>
        <h2 class="title">特性</h2>
      </section>
      <section class="group">
        <div class="body">
          ${this.big("paste", "粘贴")}
          <div class="small">${this.item("cut", "剪切")}${this.item("copy", "复制", true)}${this.item("match", "特性匹配")}</div>
        </div>
        <h2 class="title">剪切板</h2>
      </section>`;
  }
}

/* ---------- property panel ---------- */
type Row = { name: string; value?: string; kind?: string; tone?: string };
const current: Row[] = [
  { name: "层", value: "0层" },
  { name: "线型", value: "ByLayer", kind: "stroke" },
  { name: "线型比例", value: "1.000" },
  { name: "线宽", value: "ByLayer", kind: "thin" },
  { name: "颜色", value: "ByLayer", kind: "color", tone: "dark" },
  { name: "文本风格", value: "_TEL_DIM", tone: "dark" },
  { name: "标注风格", value: "STANDARD", tone: "dark" },
];
const sheetRows: Row[] = [
  { name: "图纸幅面", value: "用户自定义" },
  { name: "加长系数", value: "" },
  { name: "宽度", value: "398.744" },
  { name: "高度", value: "302.405" },
  { name: "图纸比例", value: "1:1" },
  { name: "图纸方向", value: "横放" },
];

@customElement("cad-properties")
class CadProperties extends LitElement {
  static styles = [base, css`
    :host { display: flex; flex-direction: column; background: #f0f0f0; border-left: 1px solid #fff; border-right: 1px solid #fff; color: #333; }
    .head { display: flex; align-items: center; height: 25px; padding: 0 0 0 3px; background: #e6e6e6; color: #444; }
    .head h2 { flex: 1; font-size: 13px; font-weight: 400; margin: 0; line-height: 22px; height: 24px; }
    .head button { width: 19px; display: flex; justify-content: center; }
    .pick { display: flex; padding: 1px 4px 4px 0; gap: 4px; }
    .sel { flex: 1; display: flex; align-items: center; height: 25px; background: #fdfdfd; border: 1px solid #c8c8c8; padding: 0 6px 0 2px; font-size: 13px; color: #444; }
    .sel select { appearance: none; flex: 1; }
    .pick button { width: 24px; height: 24px; border: 1px solid #b5b5b5; background: #fdfdfd; display: flex; align-items: center; justify-content: center; }
    table { width: 100%; border-collapse: collapse; table-layout: fixed; font: 12px/13px "Noto Sans CJK SC", sans-serif; background: #fdfdfd; }
    .wrap { border-top: 1px solid #c8c8c8; margin: 1px 1px 0; }
    .name { width: 109px; }
    th, td { padding: 0; height: 16px; text-align: left; vertical-align: top; font-weight: 400; border-bottom: 1px solid #cacaca; white-space: nowrap; overflow: hidden; }
    thead th { height: 20px; line-height: 18px; background: #f0f0f0; padding-left: 3px; border-bottom-color: #c0c0c0; }
    th + th, td { border-left: 1px solid #cacaca; }
    tbody th { padding-left: 19px; }
    td { padding-left: 4px; }
    tbody .section { font-weight: 700; padding-left: 8px; color: #222; }
    .section svg { display: inline-block; margin-right: 5px; }
    .lat { font: 10px/15px "Liberation Mono", monospace; vertical-align: top; }
    .dark th, .dark td { color: #000; }
    .off th, .off td { color: #a4a4a4; }
    .line { display: inline-block; width: 48px; height: 1px; background: #000; margin: 7px 5px 0 0; vertical-align: top; }
    .line.thin { background: #bbb; }
    .chip { display: inline-block; width: 12px; height: 12px; border: 1px solid #000; margin: 1px 1px 0 -2px; vertical-align: top; background: #fff; }
    .rest { flex: 1; margin: 0 1px; background: #fdfdfd; display: flex; }
    .rest::before { content: ""; width: 110px; border-right: 1px solid #cacaca; }
    .desc { height: 43px; margin: 4px 1px 0; border-top: 1px solid #c0c0c0; background: #eee; }
  `];
  row(r: Row, off = false) {
    const latin = r.value && !/[\u4e00-\u9fff]/.test(r.value);
    const deco = r.kind === "color" ? html`<span class="chip"></span>` : r.kind ? html`<span class="line ${r.kind}"></span>` : "";
    return html`<tr class=${off ? "off" : r.tone ?? ""}><th scope="row">${r.name}</th><td>${deco}${latin ? html`<span class="lat">${r.value}</span>` : r.value}</td></tr>`;
  }
  section(t: string) {
    return html`<tr><th class="section" colspan="2" scope="colgroup"><svg width="7" height="7" viewBox="0 0 7 7" aria-hidden="true"><path d="M6 0v6H0z" fill="#999"/></svg>${t}</th></tr>`;
  }
  render() {
    return html`
      <div class="head"><h2>特性</h2>
        <button aria-label="菜单"><svg width="9" height="5" viewBox="0 0 9 5"><path d="M0 0h9L4.500 5z" fill="#555"/></svg></button>
        <button aria-label="固定">${icon("pin", 13, 14)}</button>
        <button aria-label="关闭">${icon("close", 12, 14)}</button></div>
      <div class="pick">
        <div class="sel"><select aria-label="对象"><option>全局信息</option></select>${caret}</div>
        <button aria-label="清除选择">${icon("clearsel")}</button><button aria-label="快速选择">${icon("quicksel")}</button>
      </div>
      <div class="wrap"><table>
        <thead><tr><th class="name" scope="col">特性名</th><th scope="col">特性值</th></tr></thead>
        <tbody>${this.section("当前特性")}${current.map((r) => this.row(r))}${this.section("图幅设置")}${sheetRows.map((r) => this.row(r, true))}</tbody>
      </table></div>
      <div class="rest"></div>
      <div class="desc"></div>`;
  }
}

/* ---------- application ---------- */
@customElement("app-root")
class AppRoot extends LitElement {
  @property() file = "01变电所主接线图.dwg";
  static styles = [base, css`
    :host { display: flex; flex-direction: column; height: 100vh; overflow: hidden; background: #e5e5e5; font: 13px/18px Roboto, "Noto Sans CJK SC", sans-serif; }
    header { background: linear-gradient(#1f4273, #2b579a 6px); color: #fff; }
    .bar { display: flex; align-items: flex-start; height: 30px; position: relative; }
    .quick { display: flex; align-items: center; height: 18px; }
    .quick button { width: 24px; display: flex; justify-content: center; }
    .quick .first { width: 20px; justify-content: flex-start; }
    .quick .hist { width: 34px; align-items: center; gap: 6px; color: #9fb3d6; }
    .quick .first + button { margin-left: 0; }
    .quick .last { width: 18px; }
    .caption { position: absolute; left: 49%; top: 2px; margin: 0; font-size: 12px; line-height: 20px; font-weight: 400; color: #e6ebf4; white-space: nowrap; }
    nav { display: flex; height: 27px; }
    nav button { width: 54px; color: #fff; font-size: 13px; padding-bottom: 2px; }
    nav .menu { width: 48px; margin-right: 7px; }
    nav .on { background: #f0f0f0; color: #2b6fc4; }
    .find { display: flex; align-items: center; margin-left: 21px; gap: 12px; }
    .find input { width: 120px; color: #b9c6df; font-size: 13px; padding-bottom: 1px; }
    .find input::placeholder { color: #b9c6df; opacity: 1; }
    main { flex: 1; display: grid; grid-template-columns: 25px 220px 1fr; min-height: 0; border-top: 1px solid #d2d2d2; }
    .rail { display: flex; flex-direction: column; align-items: center; padding: 6px 1px 0 0; font-size: 12px; line-height: 14px; color: #333; }
    .rail span { writing-mode: vertical-rl; text-orientation: sideways; font-family: "Noto Sans CJK SC", sans-serif; }
    .work { display: flex; flex-direction: column; min-width: 0; min-height: 0; margin-left: 6px; }
    .docs { display: flex; height: 22px; align-items: flex-end; }
    .doc { display: flex; height: 20px; }
    .doc .face { display: flex; align-items: center; background: #fff; border: solid #b0b0b0; border-width: 1px 1px 0 0; padding: 0 4px 0 14px; font-family: "Noto Sans", "Noto Sans CJK SC", sans-serif; line-height: 17px; font-weight: 700; color: #444; }
    .doc .face button { margin-left: 13px; }
    .doc .face span { height: 19px; }
    .canvas { flex: 1; min-height: 0; background: #000; position: relative; overflow: hidden; }
    .canvas cad-sheet { position: absolute; left: 605px; top: 110px; }
    .mark { position: absolute; right: 15px; bottom: 2px; font-size: 18px; line-height: 24px; color: #b4b4b4; }
    .models { flex: 0 0 6px; overflow: hidden; display: flex; align-items: flex-start; border-top: 1px solid #777; padding-left: 65px; color: #444; }
    .models button { display: flex; line-height: 16px; }
    .models .on span { background: #fff; font-weight: 700; }
  `];
  render() {
    const slant = (fill: string) => html`<svg width="10" height="18" viewBox="0 0 10 18" aria-hidden="true"><path d="M0 0h10v18z" fill=${fill}/><path d="M0 0l10 18" stroke="#999"/></svg>`;
    const end = (fill: string) => html`<svg width="10" height="18" viewBox="0 0 10 18" aria-hidden="true"><path d="M0 0h10L0 18z" fill=${fill}/><path d="M10 0L0 18" stroke="#999"/></svg>`;
    return html`
      <header>
        <div class="bar">
          <div class="quick">
            <button class="first" aria-label="CAXA">${icon("logo", 13, 16)}</button>
            <button aria-label="新建">${icon("newdoc", 16, 17)}</button>
            <button aria-label="打开">${icon("open", 16, 17)}</button>
            <button aria-label="保存">${icon("save", 16, 17)}</button>
            <button aria-label="另存为">${icon("saveas", 16, 17)}</button>
            <button aria-label="打印">${icon("print", 17, 17)}</button>
            <button class="hist" aria-label="撤销">${icon("undo", 16, 17)}${caret}</button>
            <button class="hist" aria-label="恢复">${icon("redo", 16, 17)}${caret}</button>
            <button class="last" aria-label="自定义">${icon("more", 9, 17)}</button>
          </div>
          <h1 class="caption">CAXA CAD 电子图板 2020 - [C:\\Users\\liao_\\AppData\\Local\\Temp\\360zip$Temp\\360$1\\${this.file}]</h1>
        </div>
        <nav>
          <button class="menu">菜单</button><button class="on">常用</button>
          ${["插入", "标注", "图幅", "工具", "视图", "帮助"].map((t) => html`<button>${t}</button>`)}
          <label class="find">${icon("bulb", 12, 16)}<input type="text" aria-label="功能搜索" placeholder="功能搜索..."></label>
        </nav>
      </header>
      <cad-ribbon></cad-ribbon>
      <main>
        <div class="rail">${icon("rail", 16, 17)}<span>图库</span></div>
        <cad-properties></cad-properties>
        <div class="work">
          <div class="docs"><div class="doc">
            <svg width="21" height="20" viewBox="0 0 21 20" aria-hidden="true"><path d="M1 20L20 .5h1V20z" fill="#fff"/><path d="M1 20L20 .5h1" fill="none" stroke="#b0b0b0"/></svg>
            <div class="face"><span>${this.file}</span><button aria-label="关闭">${icon("close", 12, 14)}</button></div></div></div>
          <div class="canvas"><cad-sheet></cad-sheet><div class="mark">CSDN @biyezuopinvip</div></div>
          <div class="models"><button class="on">${slant("#fff")}<span>模型</span>${end("#fff")}</button><button><span>布局1</span>${end("none")}</button></div>
        </div>
      </main>`;
  }
}
